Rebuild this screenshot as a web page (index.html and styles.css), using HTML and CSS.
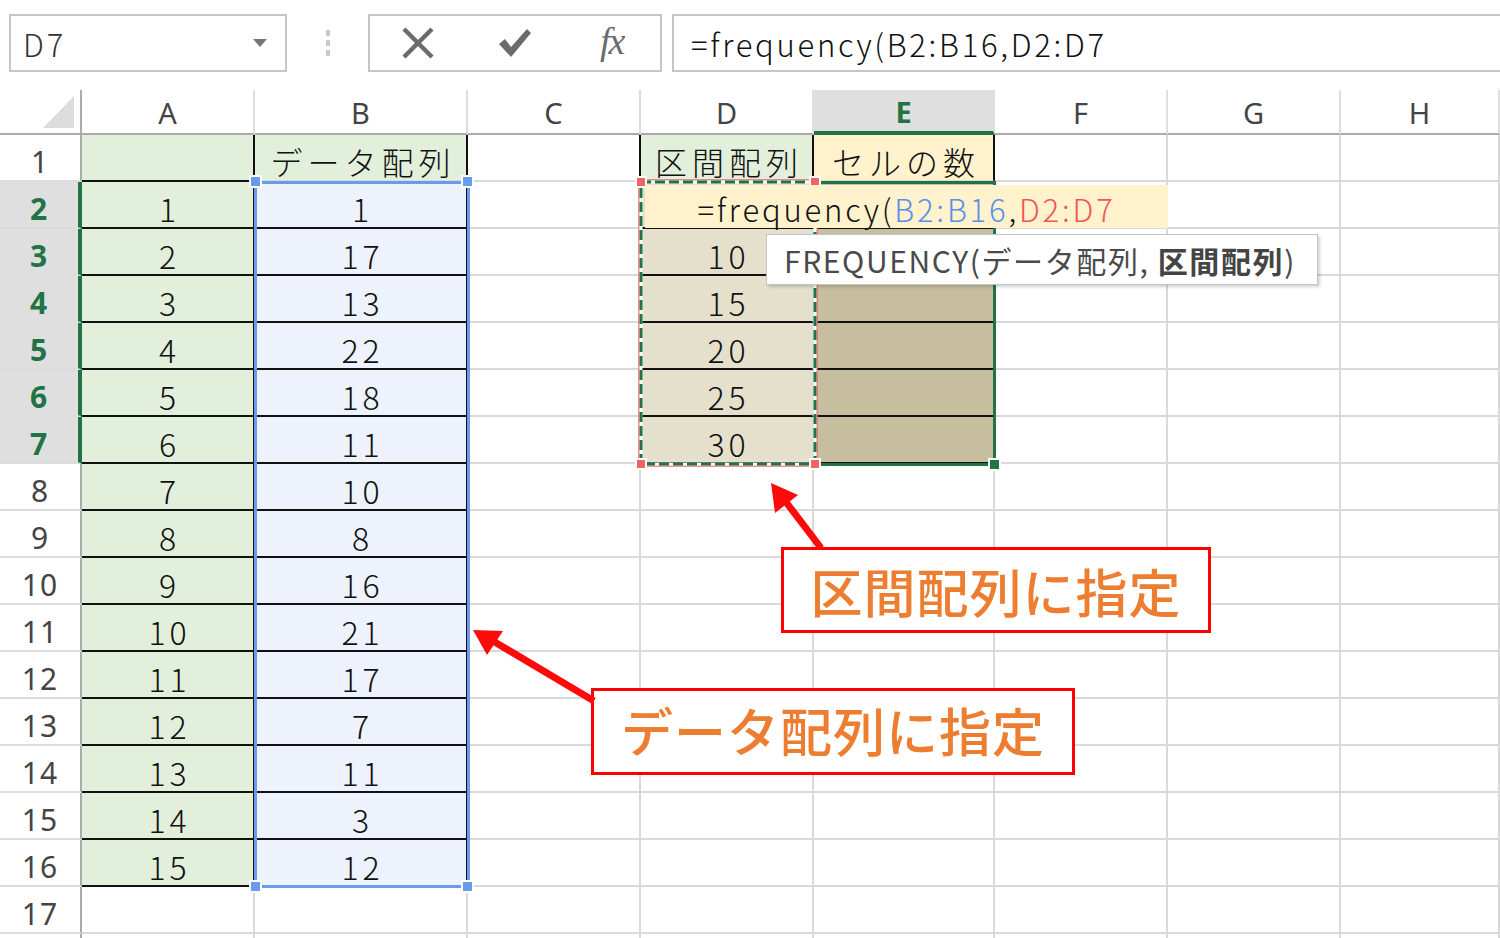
FILE: index.html
```html
<!DOCTYPE html>
<html lang="ja">
<head>
<meta charset="utf-8">
<title>FREQUENCY</title>
<link rel="stylesheet" href="styles.css">
</head>
<body>
<div class="app">
  <div class="fbar">
    <div class="namebox">
      <span class="nb-text">D7</span>
      <svg class="nb-arrow" width="14" height="8" viewBox="0 0 14 8"><path d="M0 0H14L7 8Z" fill="#777"/></svg>
    </div>
    <div class="grip">
      <svg width="4" height="26" viewBox="0 0 4 26"><rect x="0" y="0" width="4" height="6" fill="#c8c8c8"/><rect x="0" y="10" width="4" height="6" fill="#c8c8c8"/><rect x="0" y="20" width="4" height="6" fill="#c8c8c8"/></svg>
    </div>
    <div class="btns">
      <div class="btn"><svg width="34" height="32" viewBox="0 0 34 32"><path d="M3 2L31 30M31 2L3 30" stroke="#6b6b6b" stroke-width="4.5" fill="none"/></svg></div>
      <div class="btn"><svg width="36" height="32" viewBox="0 0 36 32"><path d="M2 17L8 12L14 20L30 2L34 6L14 30Z" fill="#6b6b6b"/></svg></div>
      <div class="btn fx">fx</div>
    </div>
    <div class="finput">=frequency(B2:B16,D2:D7</div>
  </div>

  <div class="sheet">
    <div class="corner"><svg width="31" height="32" viewBox="0 0 31 32"><path d="M31 0V32H0Z" fill="#dcdcdc"/></svg></div>
    <div class="h">A</div><div class="h">B</div><div class="h">C</div><div class="h">D</div><div class="h sel">E</div><div class="h">F</div><div class="h">G</div><div class="h">H</div>

    <div class="r">1</div><div class="c ga bb br"></div><div class="c ga br t">データ配列</div><div class="c br"></div><div class="c ga br t">区間配列</div><div class="c ye br t">セルの数</div><div class="c"></div><div class="c"></div><div class="c"></div>
    <div class="r sel">2</div><div class="c ga bb br">1</div><div class="c bl bb br">1</div><div class="c"></div><div class="c dd bb"></div><div class="c ee bb"></div><div class="c"></div><div class="c"></div><div class="c"></div>
    <div class="r sel">3</div><div class="c ga bb br">2</div><div class="c bl bb br">17</div><div class="c"></div><div class="c dd bb">10</div><div class="c ee bb"></div><div class="c"></div><div class="c"></div><div class="c"></div>
    <div class="r sel">4</div><div class="c ga bb br">3</div><div class="c bl bb br">13</div><div class="c"></div><div class="c dd bb">15</div><div class="c ee bb"></div><div class="c"></div><div class="c"></div><div class="c"></div>
    <div class="r sel">5</div><div class="c ga bb br">4</div><div class="c bl bb br">22</div><div class="c"></div><div class="c dd bb">20</div><div class="c ee bb"></div><div class="c"></div><div class="c"></div><div class="c"></div>
    <div class="r sel">6</div><div class="c ga bb br">5</div><div class="c bl bb br">18</div><div class="c"></div><div class="c dd bb">25</div><div class="c ee bb"></div><div class="c"></div><div class="c"></div><div class="c"></div>
    <div class="r sel">7</div><div class="c ga bb br">6</div><div class="c bl bb br">11</div><div class="c"></div><div class="c dd bb">30</div><div class="c ee bb"></div><div class="c"></div><div class="c"></div><div class="c"></div>
    <div class="r">8</div><div class="c ga bb br">7</div><div class="c bl bb br">10</div><div class="c"></div><div class="c"></div><div class="c"></div><div class="c"></div><div class="c"></div><div class="c"></div>
    <div class="r">9</div><div class="c ga bb br">8</div><div class="c bl bb br">8</div><div class="c"></div><div class="c"></div><div class="c"></div><div class="c"></div><div class="c"></div><div class="c"></div>
    <div class="r">10</div><div class="c ga bb br">9</div><div class="c bl bb br">16</div><div class="c"></div><div class="c"></div><div class="c"></div><div class="c"></div><div class="c"></div><div class="c"></div>
    <div class="r">11</div><div class="c ga bb br">10</div><div class="c bl bb br">21</div><div class="c"></div><div class="c"></div><div class="c"></div><div class="c"></div><div class="c"></div><div class="c"></div>
    <div class="r">12</div><div class="c ga bb br">11</div><div class="c bl bb br">17</div><div class="c"></div><div class="c"></div><div class="c"></div><div class="c"></div><div class="c"></div><div class="c"></div>
    <div class="r">13</div><div class="c ga bb br">12</div><div class="c bl bb br">7</div><div class="c"></div><div class="c"></div><div class="c"></div><div class="c"></div><div class="c"></div><div class="c"></div>
    <div class="r">14</div><div class="c ga bb br">13</div><div class="c bl bb br">11</div><div class="c"></div><div class="c"></div><div class="c"></div><div class="c"></div><div class="c"></div><div class="c"></div>
    <div class="r">15</div><div class="c ga bb br">14</div><div class="c bl bb br">3</div><div class="c"></div><div class="c"></div><div class="c"></div><div class="c"></div><div class="c"></div><div class="c"></div>
    <div class="r">16</div><div class="c ga bb br">15</div><div class="c bl bb br">12</div><div class="c"></div><div class="c"></div><div class="c"></div><div class="c"></div><div class="c"></div><div class="c"></div>
    <div class="r">17</div><div class="c"></div><div class="c"></div><div class="c"></div><div class="c"></div><div class="c"></div><div class="c"></div><div class="c"></div><div class="c"></div>
    <div class="r"></div><div class="c"></div><div class="c"></div><div class="c"></div><div class="c"></div><div class="c"></div><div class="c"></div><div class="c"></div><div class="c"></div>

    <!-- overlays -->
    <div class="range-blue"></div>
    <div class="hdl hb hb1"></div><div class="hdl hb hb2"></div><div class="hdl hb hb3"></div><div class="hdl hb hb4"></div>
    <div class="sel-e"></div>
    <svg class="ref-d" width="196" height="304" viewBox="0 0 196 304">
      <rect x="9" y="9" width="178" height="286" fill="none" stroke="#f06a6a" stroke-width="1.5"/>
      <rect x="11" y="11" width="174" height="282" fill="none" stroke="#fff" stroke-width="3"/>
      <rect x="11" y="11" width="174" height="282" fill="none" stroke="#217346" stroke-width="3" stroke-dasharray="10 4"/>
    </svg>
    <div class="hdl hr hr1"></div><div class="hdl hr hr2"></div><div class="hdl hr hr3"></div><div class="hdl hr hr4"></div>
    <div class="hdl fill"></div>
    <div class="editor">=frequency(<span class="ref-b">B2:B16</span>,<span class="ref-r">D2:D7</span></div>
    <div class="tip">FREQUENCY(データ配列, <b>区間配列</b>)</div>
    <div class="callout co1">区間配列に指定</div>
    <div class="callout co2">データ配列に指定</div>
    <svg class="arrows" width="1500" height="848" viewBox="0 0 1500 848">
      <line x1="786" y1="412" x2="821" y2="458" stroke="#ff0a0a" stroke-width="7"/>
      <polygon points="771,393 798,405 775,423" fill="#ff0a0a"/>
      <line x1="493" y1="551" x2="594" y2="611" stroke="#ff0a0a" stroke-width="7"/>
      <polygon points="473,540 503,541 487,565" fill="#ff0a0a"/>
    </svg>
  </div>
</div>
</body>
</html>
```

FILE: styles.css
```css
* { box-sizing: border-box; }
html, body { margin: 0; padding: 0; background: #fff; }
body {
  width: 1500px;
  height: 938px;
  overflow: hidden;
  font-family: "Noto Sans CJK JP", "Noto Sans", sans-serif;
  color: #111;
}

/* formula bar */
.fbar {
  height: 90px;
  display: flex;
  align-items: flex-start;
  padding-top: 14px;
  padding-left: 9px;
}
.namebox {
  width: 278px;
  height: 58px;
  border: 2px solid #c6c6c6;
  display: flex;
  align-items: center;
  justify-content: space-between;
  padding: 0 18px 0 12px;
}
.nb-text { font-size: 31px; font-weight: 300; color: #333; letter-spacing: 3px; }
.grip {
  width: 81px;
  height: 58px;
  display: flex;
  align-items: center;
  justify-content: center;
}
.btns {
  width: 294px;
  height: 58px;
  border: 2px solid #c6c6c6;
  display: flex;
}
.btn {
  flex: 1;
  display: flex;
  align-items: center;
  justify-content: center;
}
.fx {
  font-family: "Liberation Serif", serif;
  font-style: italic;
  font-size: 38px;
  color: #6b6b6b;
  letter-spacing: -2px;
  padding-bottom: 4px;
}
.finput {
  flex: 1;
  margin-left: 10px;
  height: 58px;
  border: 2px solid #c6c6c6;
  border-right: none;
  display: flex;
  align-items: center;
  padding-left: 17px;
  font-size: 31px;
  font-weight: 300;
  letter-spacing: 2.7px;
  color: #111;
}

/* sheet grid */
.sheet {
  position: relative;
  height: 848px;
  overflow: hidden;
  display: grid;
  grid-template-columns: 82px 173px 213px 173px 173px 181px 173px 173px 1fr;
  grid-template-rows: 45px repeat(18, 47px);
}
.corner {
  border-right: 2px solid #ababab;
  border-bottom: 2px solid #ababab;
  display: flex;
  align-items: flex-end;
  justify-content: flex-end;
  padding: 0 6px 5px 0;
}
.h {
  display: flex;
  align-items: center;
  justify-content: center;
  font-family: "Noto Sans", sans-serif;
  font-size: 29px;
  color: #444;
  border-right: 2px solid #dedede;
  border-bottom: 2px solid #ababab;
  padding-top: 1px;
}
.h.sel {
  background: #dfdfdf;
  color: #217346;
  font-weight: 700;
  border-bottom: 4px solid #217346;
}
.r {
  display: flex;
  align-items: center;
  justify-content: center;
  font-family: "Noto Sans", sans-serif;
  font-size: 30px;
  color: #444;
  letter-spacing: 1px;
  border-right: 2px solid #ababab;
  border-bottom: 2px solid #dcdcdc;
  padding-top: 8px;
}
.r.sel {
  background: #dfdfdf;
  color: #217346;
  font-weight: 700;
  border-right: 4px solid #217346;
}
.c {
  display: flex;
  align-items: center;
  justify-content: center;
  font-size: 32px;
  font-weight: 300;
  letter-spacing: 4px;
  color: #111;
  border-right: 2px solid #d9d9d9;
  border-bottom: 2px solid #d9d9d9;
  padding-top: 6px;
  padding-left: 4px;
}
.c.t { letter-spacing: 5px; padding-left: 5px; font-size: 32px; }
.bb { border-bottom-color: #111; }
.br { border-right-color: #111; }
.ga { background: #e2efda; }
.bl { background: #edf2fc; }
.ye { background: #fff2cc; }
.dd { background: #e4e0cb; }
.ee { background: #c6be9f; }

/* overlays */
.range-blue {
  position: absolute;
  left: 254px;
  top: 91px;
  width: 216px;
  height: 707px;
  border: 3px solid #6a9aec;
}
.hdl {
  position: absolute;
  width: 13px;
  height: 13px;
  border: 2px solid #fff;
}
.hb { background: #6a9aec; }
.hb1 { left: 249px; top: 85px; }
.hb2 { left: 461px; top: 85px; }
.hb3 { left: 249px; top: 790px; }
.hb4 { left: 461px; top: 790px; }
.sel-e {
  position: absolute;
  left: 814px;
  top: 91px;
  width: 182px;
  height: 285px;
  border: 3px solid #217346;
  border-left: none;
}
.ref-d {
  position: absolute;
  left: 630px;
  top: 81px;
}
.hr { background: #f06464; width: 12px; height: 12px; }
.hr1 { left: 635px; top: 86px; }
.hr2 { left: 809px; top: 86px; }
.hr3 { left: 635px; top: 368px; }
.hr4 { left: 809px; top: 368px; }
.fill { background: #217346; left: 988px; top: 368px; }
.editor {
  position: absolute;
  left: 645px;
  top: 95px;
  width: 523px;
  height: 43px;
  background: #fff2cc;
  display: flex;
  align-items: center;
  justify-content: center;
  font-size: 31px;
  font-weight: 300;
  letter-spacing: 2.8px;
  color: #111;
  padding-top: 3px;
  white-space: pre;
}
.ref-b { color: #5b8ee9; }
.ref-r { color: #f05656; }
.tip {
  position: absolute;
  left: 766px;
  top: 144px;
  width: 552px;
  height: 51px;
  background: #fff;
  border: 1px solid #c4c4c4;
  box-shadow: 2px 2px 3px rgba(0, 0, 0, 0.18);
  display: flex;
  align-items: center;
  padding-left: 17px;
  font-size: 30px;
  letter-spacing: 1.6px;
  color: #4a4a4a;
  white-space: pre;
}
.tip b { font-weight: 700; color: #444; }
.callout {
  position: absolute;
  border: 3px solid #ff0000;
  background: #fff;
  display: flex;
  align-items: center;
  justify-content: center;
  color: #ed7d31;
  font-size: 52px;
  font-weight: 500;
  letter-spacing: 1px;
}
.co1 { left: 781px; top: 457px; width: 430px; height: 86px; }
.co2 { left: 591px; top: 598px; width: 484px; height: 87px; padding-bottom: 4px; }
.arrows {
  position: absolute;
  left: 0;
  top: 0;
  pointer-events: none;
}
```
